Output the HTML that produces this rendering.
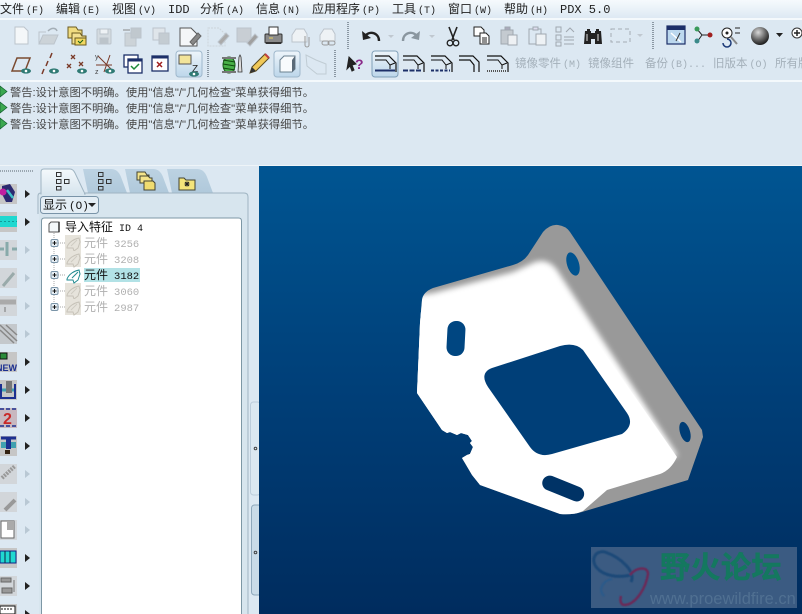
<!DOCTYPE html>
<html><head><meta charset="utf-8"><style>
html,body{margin:0;padding:0;background:#dce8f2;width:802px;height:614px;overflow:hidden}
svg{display:block}
text{font-family:"Liberation Sans","Noto Sans CJK SC",sans-serif;font-size:12px}
.m{fill:#222}
.w{fill:#444;font-size:11px}
.g{fill:#a4b0ba;font-size:11.5px}
.t{fill:#111}
.d{fill:#b0b0b0}
.mono{font-family:"Liberation Mono","Noto Sans CJK SC",monospace}
</style></head><body>
<svg width="802" height="614" viewBox="0 0 802 614" xmlns="http://www.w3.org/2000/svg">
<defs>
<linearGradient id="mg" x1="0" y1="0" x2="0" y2="1"><stop offset="0" stop-color="#f6fafd"/><stop offset="1" stop-color="#dde9f3"/></linearGradient>
<linearGradient id="vp" x1="0" y1="0" x2="0" y2="1"><stop offset="0" stop-color="#005592"/><stop offset=".5" stop-color="#003f78"/><stop offset="1" stop-color="#002c5e"/></linearGradient>
<linearGradient id="hl" x1="0" y1="0" x2="0" y2="1"><stop offset="0" stop-color="#eef5fb"/><stop offset="1" stop-color="#bcd6ea"/></linearGradient>
<linearGradient id="tab" x1="0" y1="0" x2="0" y2="1"><stop offset="0" stop-color="#bcd2e2"/><stop offset="1" stop-color="#b0c9db"/></linearGradient>
<linearGradient id="tab1" x1="0" y1="0" x2="0" y2="1"><stop offset="0" stop-color="#f4f9fc"/><stop offset="1" stop-color="#d7e5ee"/></linearGradient>
<radialGradient id="sph" cx=".4" cy=".3" r=".75"><stop offset="0" stop-color="#d8d8d8"/><stop offset=".55" stop-color="#666"/><stop offset="1" stop-color="#111"/></radialGradient>
<filter id="b3" x="-10%" y="-10%" width="120%" height="120%"><feGaussianBlur stdDeviation="3"/></filter>
<filter id="b1"><feGaussianBlur stdDeviation=".4"/></filter>
<clipPath id="sil"><path d="M422 300Q423 292 433 288L513 265Q523 262 528 255L543 232Q550 224 558 225Q566 226 570 232L702 430L703 437L688 480L582 512Q572 515 560 514L480 485L472 475L462 458L467 455L470 454L473 447L470 443L472 441L468 435L461 433L457 435L450 432L447 433L442 430L417 393L420 323Z"/></clipPath>
<g id="eye"><ellipse cx="0" cy="0" rx="5" ry="2.6" fill="#2f7a74"/><circle cx="0" cy="0" r="1.3" fill="#fff"/></g>
<g id="arr"><path d="M0 0l5 4-5 4z" fill="#222"/></g>
<g id="arrg"><path d="M0 0l5 4-5 4z" fill="#b9c8d4"/></g>
<g id="pt"><rect x="-1" y="-8" width="16" height="16" fill="#e6e3db"/><path d="M1 4c2-5 7-8 12-9l1 4-2 6-4 3-1-3-6 0z" fill="none" stroke="#c6c2b8"/><path d="M5 3l6-6" stroke="#cfcbc2"/></g>
<g id="bend"><path d="M0 1h14l7 7v9" fill="none" stroke="#111" stroke-width="1.200"/><path d="M0 5h11l4 5 5-2M15 10v4" fill="none" stroke="#111"/></g>
</defs>

<!-- base -->
<rect width="802" height="614" fill="#dce8f2"/>
<rect width="802" height="18" fill="url(#mg)"/>
<rect y="18" width="802" height="2" fill="#f4f9fc"/>
<rect y="80" width="802" height="2" fill="#f4f9fc"/>

<!-- menu -->
<text class="m" x="0" y="13">文件<tspan class="mono" font-size="10" dx="2">(F)</tspan></text>
<text class="m" x="56" y="13">编辑<tspan class="mono" font-size="10" dx="2">(E)</tspan></text>
<text class="m" x="112" y="13">视图<tspan class="mono" font-size="10" dx="2">(V)</tspan></text>
<text class="m mono" x="168" y="13" font-size="11">IDD</text>
<text class="m" x="200" y="13">分析<tspan class="mono" font-size="10" dx="2">(A)</tspan></text>
<text class="m" x="256" y="13">信息<tspan class="mono" font-size="10" dx="2">(N)</tspan></text>
<text class="m" x="312" y="13">应用程序<tspan class="mono" font-size="10" dx="2">(P)</tspan></text>
<text class="m" x="392" y="13">工具<tspan class="mono" font-size="10" dx="2">(T)</tspan></text>
<text class="m" x="448" y="13">窗口<tspan class="mono" font-size="10" dx="2">(W)</tspan></text>
<text class="m" x="504" y="13">帮助<tspan class="mono" font-size="10" dx="2">(H)</tspan></text>
<text class="m mono" x="560" y="13" font-size="11">PDX 5.0</text>

<!-- separators -->
<g stroke="#8a97a2" stroke-width="2" stroke-dasharray="1 1">
<path d="M348 22V50M653 22V50M208 50V77M335 50V77"/>
</g>

<!-- row 1 -->
<g fill="none" stroke="#bcc4cc">
<path d="M15 27h9l4 4v13H15z" fill="#f4f7f9"/>
<path d="M39 44l4-9h15l-4 9z" fill="#ccd3d8"/><path d="M39 44v-12h7"/><path d="M48 31c4-4 8-3 9 0" stroke="#a4aeb6" stroke-width="1.500"/>
<rect x="97" y="29" width="14" height="15" rx="1" fill="#d4dbe0"/><rect x="100" y="29" width="8" height="5" fill="#eef2f5"/><rect x="100" y="38" width="8" height="6" fill="#bcc4ca"/>
<rect x="125" y="33" width="11" height="13" fill="#ccd3d8"/><rect x="131" y="28" width="10" height="10" fill="#c0c8ce"/><path d="M123 30h7" stroke="#888"/>
<rect x="153" y="28" width="12" height="12" fill="#dfe5ea"/><rect x="159" y="33" width="10" height="11" fill="#c4ccd2"/>
<path d="M208 28h11l6 6v12h-17z" stroke="#ccd4da" stroke-dasharray="2 1"/><path d="M218 42l8-9 3 3-8 9z" fill="#aaa"/>
<rect x="237" y="28" width="14" height="14" fill="#c8ced4"/><path d="M247 43l8-9 3 3-8 9z" fill="#a0a0a0"/>
<path d="M292 35l4-6h8l3 5v8h-15z" fill="#eef2f5"/><path d="M305 36v9a2 2 0 004 0v-8" stroke="#999"/>
<path d="M320 35l4-6h8l3 5v7h-15z" fill="#eef2f5"/><rect x="322" y="41" width="7" height="4" rx="2" stroke="#999"/><rect x="328" y="41" width="7" height="4" rx="2" stroke="#999"/>
</g>
<path d="M180 28h11l6 6v12h-17z" fill="#f4f6f8" stroke="#555"/><path d="M190 42l8-9 3 3-8 9z" fill="#888" stroke="#666"/>
<path d="M68 27h8l2 3h4v8H68z" fill="#f0dc80" stroke="#6a5a20"/>
<path d="M72 33h8l2 3h4v8H72z" fill="#f2e090" stroke="#6a5a20"/>
<rect x="75" y="38" width="11" height="7" fill="#f2d860" stroke="#6a5a20"/><path d="M78 41l2 2 3-3" stroke="#186018" fill="none"/>
<rect x="265" y="34" width="17" height="9" rx="1" fill="#8a8a8a" stroke="#333"/><rect x="269" y="27" width="9" height="8" fill="#fff" stroke="#333"/><rect x="266" y="42" width="15" height="2" fill="#333"/><path d="M269 38h4" stroke="#e8d060"/>
<path d="M379 41c0-8-9-11-14-5" fill="none" stroke="#222" stroke-width="2.400"/><path d="M362 31l1 9 8-2z" fill="#222"/>
<path d="M388 35h6l-3 3z" fill="#c0c8d0"/>
<path d="M403 41c0-8 9-11 14-5" fill="none" stroke="#8a969f" stroke-width="2.400"/><path d="M420 31l-1 9-8-2z" fill="#8a969f"/>
<path d="M429 35h6l-3 3z" fill="#c0c8d0"/>
<path d="M449 27l5 13M457 27l-5 13" stroke="#222" stroke-width="1.600"/><circle cx="450" cy="43" r="2.800" fill="none" stroke="#222" stroke-width="1.300"/><circle cx="456" cy="43" r="2.800" fill="none" stroke="#222" stroke-width="1.300"/>
<path d="M474 27h7l3 3v6h-10z" fill="#fff" stroke="#222"/><path d="M480 33h6l3 3v8h-9z" fill="#fff" stroke="#222"/><path d="M482 38h5M482 40h5M482 42h5" stroke="#222"/>
<g fill="none" stroke="#a0a8b0">
<rect x="501" y="30" width="12" height="14" fill="#c4cad0"/><path d="M508 35h9v10h-9z" fill="#eef1f4"/><rect x="505" y="27" width="5" height="3" fill="#aab"/>
<rect x="529" y="29" width="12" height="15"/><rect x="536" y="34" width="10" height="11" fill="#eef2f5"/><rect x="533" y="27" width="5" height="3" fill="#dde"/>
<rect x="556" y="27" width="5" height="5"/><rect x="556" y="35" width="5" height="5"/><rect x="556" y="42" width="5" height="4"/><path d="M564 37h10M564 40h10M564 44h10M566 32l4-4 4 4"/>
</g>
<g fill="#222"><path d="M585 31h2v-2h3v2h1v13h-7z"/><path d="M595 31h1v-2h3v2h2l1 13h-7z"/><rect x="590" y="33" width="6" height="6"/></g>
<path d="M587 34v7M598 34v7" stroke="#ddd"/>
<rect x="611" y="29" width="19" height="13" fill="none" stroke="#a4acb4" stroke-dasharray="4 3"/>
<path d="M637 34h6l-3 3z" fill="#c0c8d0"/>
<rect x="667" y="26" width="18" height="18" fill="#bcd8ee" stroke="#1c2f68" stroke-width="1.200"/><rect x="667" y="26" width="18" height="4" fill="#1c2f68"/><path d="M671 33l10 9" stroke="#fff" stroke-width="1.500"/><path d="M680 33l-4 8" stroke="#333"/>
<path d="M697 29l5 6h8M702 35l-5 7" fill="none" stroke="#222"/><circle cx="697" cy="29" r="2.500" fill="#3a9a5a"/><circle cx="697" cy="41" r="2.500" fill="#3a8a8a"/><circle cx="710" cy="35" r="2.500" fill="#a02020"/>
<circle cx="727" cy="33" r="5" fill="#fff" stroke="#222"/><circle cx="727" cy="33" r="1.500" fill="#222"/><path d="M731 37l6 7" stroke="#888" stroke-width="2"/><path d="M735 28h5M735 33h5" stroke="#222"/><path d="M723 43a4 4 0 104-4" fill="none" stroke="#1c3a78" stroke-width="1.500"/>
<circle cx="760" cy="36" r="9" fill="url(#sph)"/>
<path d="M776 33h7l-3.500 4z" fill="#222"/>
<circle cx="797" cy="33" r="5" fill="#fff" stroke="#333"/><path d="M794 33h6M797 30v6" stroke="#222" stroke-width="1.500"/>

<!-- row 2 -->
<rect x="176" y="51" width="26" height="26" rx="3" fill="url(#hl)" stroke="#9fb8cc"/>
<rect x="274" y="51" width="26" height="26" rx="3" fill="url(#hl)" stroke="#9fb8cc"/>
<rect x="372" y="51" width="26" height="26" rx="3" fill="url(#hl)" stroke="#7f9fb8"/>
<path d="M12 71l5-13h13l-5 13z" fill="none" stroke="#7a4a30" stroke-width="1.500"/><use href="#eye" x="26" y="71"/>
<path d="M42 74l2-5M46 66l2-5M50 58l2-5" stroke="#7a3a28" stroke-width="1.500"/><use href="#eye" x="54" y="71"/>
<g fill="none" stroke="#7a3a28" stroke-width="1.300"><path d="M71 55l4 4M75 55l-4 4M79 62l4 4M83 62l-4 4M67 64l4 4M71 64l-4 4"/></g><use href="#eye" x="82" y="71"/>
<path d="M98 56l14 14M110 55l-6 17M96 65h16" fill="none" stroke="#7a3a28"/><use href="#eye" x="110" y="71"/>
<text x="95" y="59" style="font-size:7px" fill="#444">y</text><text x="95" y="74" style="font-size:7px" fill="#444">z</text>
<rect x="124" y="55" width="14" height="12" fill="#fff" stroke="#1c2f68" stroke-width="1.300"/><rect x="128" y="59" width="14" height="14" fill="#fff" stroke="#1c2f68" stroke-width="1.300"/><rect x="128" y="59" width="14" height="2.500" fill="#1c2f68"/><path d="M131 66l3 3 5-5" fill="none" stroke="#1c8a38" stroke-width="1.500"/>
<rect x="152" y="56" width="16" height="15" fill="#fff" stroke="#1c2f68" stroke-width="1.300"/><rect x="152" y="56" width="16" height="2.500" fill="#1c2f68"/><path d="M157 62l5 5M162 62l-5 5" stroke="#a02020" stroke-width="1.500"/>
<rect x="179" y="55" width="12" height="9" fill="#f2e49a" stroke="#555"/><text x="192" y="72" style="font-size:10px" fill="#222">Z</text><use href="#eye" x="194" y="74"/>
<ellipse cx="229" cy="65" rx="6" ry="8" fill="#48b048" stroke="#1a5a1a"/><path d="M223 60l12 2M223 64l12 2M223 68l12 2" stroke="#0f4a0f"/><rect x="222" y="57" width="14" height="2" fill="#777"/><rect x="222" y="71" width="14" height="2" fill="#777"/>
<path d="M238 72l1-15 1-2 1 2 1 15z" fill="#ddd" stroke="#333" stroke-width=".8"/>
<path d="M250 73l2-6 13-13 4 4-13 13z" fill="#f0c858" stroke="#5a4a20"/><path d="M265 54l4 4" stroke="#c04040" stroke-width="2"/><path d="M250 73l2-6 4 4z" fill="#333"/>
<path d="M280 60l4-4h11v13l-3 3h-12z" fill="#f8fbfd" stroke="#6a8090"/><path d="M295 56v13l-3 3v-12z" fill="#5a6a78"/>
<path d="M306 55l10 5 10 4v10h-9l-10-8z" fill="none" stroke="#c0ccd4"/>
<path d="M349 57l7 7-4 1 2 5-2 1-2-5-3 3z" fill="#222" stroke="#222"/><text x="355" y="69" style="font-size:14px;font-weight:bold;font-family:'Liberation Sans'" fill="#8a2a8a">?</text>

<g transform="translate(375,55)"><use href="#bend"/><path d="M0 15.500h20" stroke="#1c2f68" stroke-width="2"/></g>
<g transform="translate(403,55)"><use href="#bend"/><path d="M0 15.500h19" stroke="#1c2f68" stroke-width="2" stroke-dasharray="5 1.500"/></g>
<g transform="translate(431,55)"><use href="#bend"/><path d="M0 15.500h19" stroke="#1c2f68" stroke-width="2" stroke-dasharray="3 1.500"/></g>
<g transform="translate(459,55)"><path d="M0 1h14l6 6v10M0 5h11l4 5v7" fill="none" stroke="#111" stroke-width="1.200"/></g>
<g transform="translate(487,55)"><use href="#bend"/><path d="M0 16h19" stroke="#555" stroke-width="2" stroke-dasharray="1 1"/></g>

<text class="g" x="515" y="67">镜像零件<tspan class="mono" font-size="10" dx="2">(M)</tspan></text>
<text class="g" x="588" y="67">镜像组件</text>
<text class="g" x="645" y="67">备份<tspan class="mono" font-size="10" dx="2">(B)...</tspan></text>
<text class="g" x="713" y="67">旧版本<tspan class="mono" font-size="10" dx="2">(O)</tspan></text>
<text class="g" x="775" y="67">所有版</text>

<!-- messages -->
<g fill="#3ca850" stroke="#136030" stroke-width=".7">
<path d="M0 86l7 5.500-7 5.500z"/><path d="M0 102l7 5.500-7 5.500z"/><path d="M0 118l7 5.500-7 5.500z"/>
</g>
<text class="w" x="10" y="96" textLength="304" lengthAdjust="spacingAndGlyphs">警告:设计意图不明确。使用"信息"/"几何检查"菜单获得细节。</text>
<text class="w" x="10" y="112" textLength="304" lengthAdjust="spacingAndGlyphs">警告:设计意图不明确。使用"信息"/"几何检查"菜单获得细节。</text>
<text class="w" x="10" y="128" textLength="304" lengthAdjust="spacingAndGlyphs">警告:设计意图不明确。使用"信息"/"几何检查"菜单获得细节。</text>

<!-- left panel -->
<rect x="34" y="166" width="225" height="448" fill="#dce8f2"/>
<rect x="0" y="165" width="802" height="1" fill="#eef4f8"/>
<path d="M0 171H33" stroke="#9aa6b0" stroke-dasharray="1 1" stroke-width="2"/>
<!-- left strip -->
<g fill="#c6c6c6">
<rect x="0" y="184" width="17" height="20"/><rect x="0" y="212" width="17" height="20"/><rect x="0" y="240" width="17" height="20" fill="#d2d6da"/><rect x="0" y="268" width="17" height="20" fill="#d2d6da"/><rect x="0" y="296" width="17" height="20" fill="#d2d6da"/><rect x="0" y="324" width="17" height="20" fill="#c4c8cc"/><rect x="0" y="352" width="17" height="20"/><rect x="0" y="380" width="17" height="20"/><rect x="0" y="408" width="17" height="20"/><rect x="0" y="436" width="17" height="20"/><rect x="0" y="464" width="17" height="20" fill="#d2d6da"/><rect x="0" y="492" width="17" height="20" fill="#d2d6da"/><rect x="0" y="520" width="17" height="20" fill="#d2d6da"/><rect x="0" y="548" width="17" height="20"/><rect x="0" y="576" width="17" height="20" fill="#d2d6da"/><rect x="0" y="604" width="17" height="10"/>
</g>
<path d="M2 186l8-2 5 8-3 10-6 0-4-8z" fill="#2a2a70"/><circle cx="3" cy="192" r="3.500" fill="#c020a0"/><path d="M7 190l6 8" stroke="#40c0c8" stroke-width="2.500"/>
<rect x="0" y="216" width="17" height="11" fill="#20d8d0"/><path d="M0 221.500H17" stroke="#129a98" stroke-dasharray="2 2"/>
<path d="M0 249h4M12 249h5M7 242v14" stroke="#8aa" stroke-width="3"/>
<path d="M3 286l11-13" stroke="#9aa" stroke-width="3"/>
<path d="M0 302h16" stroke="#aaa" stroke-width="5"/><path d="M5 312v-5" stroke="#777"/>
<path d="M0 330l14 13M0 325l17 16M6 325l11 10" stroke="#888" stroke-width="1.500"/>
<rect x="0" y="353" width="7" height="6" fill="#2a8a3a" stroke="#111"/><text x="-4" y="371" style="font-size:9px;font-weight:bold;font-family:'Liberation Sans'" fill="#1c2f90">NEW</text>
<path d="M2 390h4M11 390h4" stroke="#40a0b0" stroke-width="3"/><rect x="6" y="381" width="6" height="12" fill="#777"/><path d="M1 384v14h14v-14" fill="none" stroke="#1c2f90" stroke-width="2"/>
<rect x="0" y="408" width="17" height="20" fill="#c8b8c0"/><text x="3" y="424" style="font-size:16px;font-weight:bold;font-family:'Liberation Sans'" fill="#c82828">2</text><path d="M0 409h17M0 426h17" stroke="#1c2f90" stroke-width="1.500" stroke-dasharray="4 2"/>
<path d="M1 438h15" stroke="#1c2f90" stroke-width="3"/><rect x="6" y="438" width="5" height="11" fill="#1c2f90"/><rect x="1" y="442" width="5" height="6" fill="#40a0b0"/><rect x="11" y="442" width="5" height="6" fill="#40a0b0"/><rect x="5" y="450" width="5" height="4" fill="#321"/>
<path d="M2 478l13-12" stroke="#999" stroke-width="4" stroke-dasharray="2 1"/>
<path d="M5 510l10-10" stroke="#999" stroke-width="4"/>
<rect x="1" y="521" width="13" height="17" fill="#fff" stroke="#666"/><rect x="7" y="521" width="7" height="9" fill="#aaa"/>
<rect x="0" y="551" width="16" height="12" fill="#20d8d0" stroke="#128"/><path d="M5 551v12M10 551v12" stroke="#124"/>
<path d="M1 578h10v4H1zM2 588h10v5H2z" fill="#999" stroke="#666"/><path d="M14 580v12" stroke="#777"/>
<rect x="0" y="606" width="15" height="8" fill="#fff" stroke="#111"/><path d="M1 609h12" stroke="#111" stroke-dasharray="2 1"/>
<use href="#arr" x="25" y="190"/><use href="#arr" x="25" y="218"/><use href="#arrg" x="25" y="246"/><use href="#arrg" x="25" y="274"/><use href="#arrg" x="25" y="302"/><use href="#arrg" x="25" y="330"/><use href="#arr" x="25" y="358"/><use href="#arr" x="25" y="386"/><use href="#arr" x="25" y="414"/><use href="#arr" x="25" y="442"/><use href="#arrg" x="25" y="470"/><use href="#arrg" x="25" y="498"/><use href="#arrg" x="25" y="526"/><use href="#arr" x="25" y="554"/><use href="#arr" x="25" y="582"/><use href="#arr" x="25" y="610"/>

<!-- tabs -->
<path d="M88 193l-5-24h28q7 0 10 8l6 16z" fill="url(#tab)"/>
<path d="M130 193l-5-24h28q7 0 10 8l6 16z" fill="url(#tab)"/>
<path d="M172 193l-5-24h30q7 0 10 8l6 16z" fill="url(#tab)"/>
<rect x="39" y="193" width="209" height="421" fill="#d7e5ee"/>
<path d="M38 214v-18q0-3 3-3h203q4 0 4 4v417" fill="none" stroke="#9fb4c2"/>
<path d="M41 194v-22q0-3 3-3h26q3 0 5 4l10 21z" fill="url(#tab1)" stroke="#9fb4c2"/>
<path d="M41.500 193.500H84" stroke="#d7e5ee" stroke-width="2"/>
<g fill="none" stroke="#333" stroke-width="1">
<rect x="56.500" y="172.500" width="4.500" height="4"/><rect x="56.500" y="179.500" width="4.500" height="4"/><rect x="64.500" y="179.500" width="4.500" height="4"/><rect x="56.500" y="186.500" width="4.500" height="3.500"/>
<rect x="98.500" y="172.500" width="4.500" height="4"/><rect x="98.500" y="179.500" width="4.500" height="4"/><rect x="106.500" y="179.500" width="4.500" height="4"/><rect x="98.500" y="186.500" width="4.500" height="3.500"/>
</g>
<path d="M137 172h8l2 3h2v5h-12z" fill="#f4e48a" stroke="#443"/><path d="M140 176h8l2 2h2v5h-12z" fill="#f4e48a" stroke="#443"/><path d="M144 181h9l2 2v7h-11z" fill="#f0dc70" stroke="#443"/>
<path d="M179 178h5l2 2h9v10h-16z" fill="#f4e47a" stroke="#443"/><path d="M187 181.500v5M184.500 184h5M185 182l4 4M189 182l-4 4" stroke="#222"/>

<!-- dropdown -->
<rect x="40.500" y="196.500" width="58" height="17" rx="3" fill="#e4eef5" stroke="#7a94a8"/>
<text class="t" x="43" y="209">显示<tspan class="mono" font-size="11" dx="2">(O)</tspan></text>
<path d="M88 203h8l-4 4z" fill="#222"/>

<!-- tree -->
<path d="M41.500 614V221q0-3 3-3h194q3 0 3 3v393" fill="#fff" stroke="#7d97a5"/>
<path d="M49 224l2-2h8v10h-10z" fill="#f4f8fa" stroke="#555"/><path d="M59 222v10" stroke="#333" stroke-width="1.500"/>
<text class="t" x="65" y="231">导入特征<tspan class="mono" font-size="10" dx="6">ID 4</tspan></text>
<path d="M54 231V308M54 243h12M54 259h12M54 275h12M54 291h12M54 307h12" stroke="#aaa" stroke-dasharray="1 1"/>
<use href="#pt" x="66" y="243"/><use href="#pt" x="66" y="259"/><use href="#pt" x="66" y="291"/><use href="#pt" x="66" y="307"/>
<path d="M67 279c2-5 7-8 12-9l1 4-2 6-4 3-1-3-6 0z" fill="#fff" stroke="#1f8a90"/><path d="M72 278l6-6" stroke="#1f8a90"/>
<g fill="#e6eef4" stroke="#7a94a8"><rect x="51" y="239.500" width="7" height="7" rx="1.500"/><rect x="51" y="255.500" width="7" height="7" rx="1.500"/><rect x="51" y="271.500" width="7" height="7" rx="1.500"/><rect x="51" y="287.500" width="7" height="7" rx="1.500"/><rect x="51" y="303.500" width="7" height="7" rx="1.500"/></g>
<path d="M52.500 243h4M54.500 241v4M52.500 259h4M54.500 257v4M52.500 275h4M54.500 273v4M52.500 291h4M54.500 289v4M52.500 307h4M54.500 305v4" stroke="#111"/>
<rect x="84" y="268" width="56" height="14" fill="#b2e2e6"/>
<text class="d" x="84" y="247">元件<tspan class="mono" font-size="10.500" dx="6">3256</tspan></text>
<text class="d" x="84" y="263">元件<tspan class="mono" font-size="10.500" dx="6">3208</tspan></text>
<text class="t" x="84" y="279">元件<tspan class="mono" font-size="10.500" dx="6">3182</tspan></text>
<text class="d" x="84" y="295">元件<tspan class="mono" font-size="10.500" dx="6">3060</tspan></text>
<text class="d" x="84" y="311">元件<tspan class="mono" font-size="10.500" dx="6">2987</tspan></text>

<!-- sashes -->
<rect x="250.500" y="402" width="10" height="93" rx="3" fill="#dbe8f1" stroke="#bccddb"/>
<rect x="251.500" y="505" width="10" height="90" rx="3" fill="#c9dbe8" stroke="#8ea8bb"/>
<circle cx="255.500" cy="448.500" r="1.300" fill="none" stroke="#444"/>
<circle cx="255.500" cy="552.500" r="1.300" fill="none" stroke="#444"/>

<!-- viewport -->
<rect x="259" y="166" width="543" height="448" fill="url(#vp)"/>
<g clip-path="url(#sil)">
<rect x="410" y="220" width="300" height="300" fill="#999"/>
<path d="M410 296L433 293L513 272L535 262Q548 258 557 270L678 456L650 460L410 460Z" fill="#fff" filter="url(#b3)"/>
<path d="M410 320L435 300L515 278L540 268L550 275L677 457Q671 470 660 474L607 490L583 511L560 520L410 520Z" fill="#fff"/>
</g>
<path d="M492 368L560 346Q575 342 583 350L627 413Q635 425 622 434L552 454Q538 458 530 447L488 387Q479 373 492 368Z" fill="#003f78"/>
<rect x="447" y="321" width="18" height="35" rx="8.500" fill="#004681" transform="rotate(3 456 338)"/>
<rect x="541" y="481" width="44" height="15" rx="7.500" fill="#003366" transform="rotate(22 563 489)"/>
<ellipse cx="573" cy="264" rx="6" ry="12" fill="#00538f" transform="rotate(-17 573 264)"/>
<ellipse cx="685" cy="432" rx="5" ry="10.500" fill="#003d75" transform="rotate(-17 685 432)"/>

<!-- watermark -->
<rect x="591" y="547" width="206" height="61" fill="#3b5b82"/>
<g fill="none" filter="url(#b1)">
<path d="M631 582C636 572 622 558 605 552C595 550 590 560 597 568C604 576 618 578 631 575" stroke="#1e4a78" stroke-width="3"/>
<path d="M630 575C636 567 648 566 648 574C646 588 636 604 625 605C620 605 620 600 621 596" stroke="#6a2a58" stroke-width="2.500"/>
<path d="M612 579C602 581 598 590 604 596" stroke="#2a5a8a" stroke-width="2"/>
</g>
<text x="660" y="578" fill="#14785f" stroke="#14785f" stroke-width=".5" style="font-size:30px;font-weight:bold;letter-spacing:.5px">野火论坛</text>
<text x="650" y="604" fill="#507092" style="font-size:16.500px;font-family:'Liberation Sans',sans-serif">www.proewildfire.cn</text>
</svg>
</body></html>
